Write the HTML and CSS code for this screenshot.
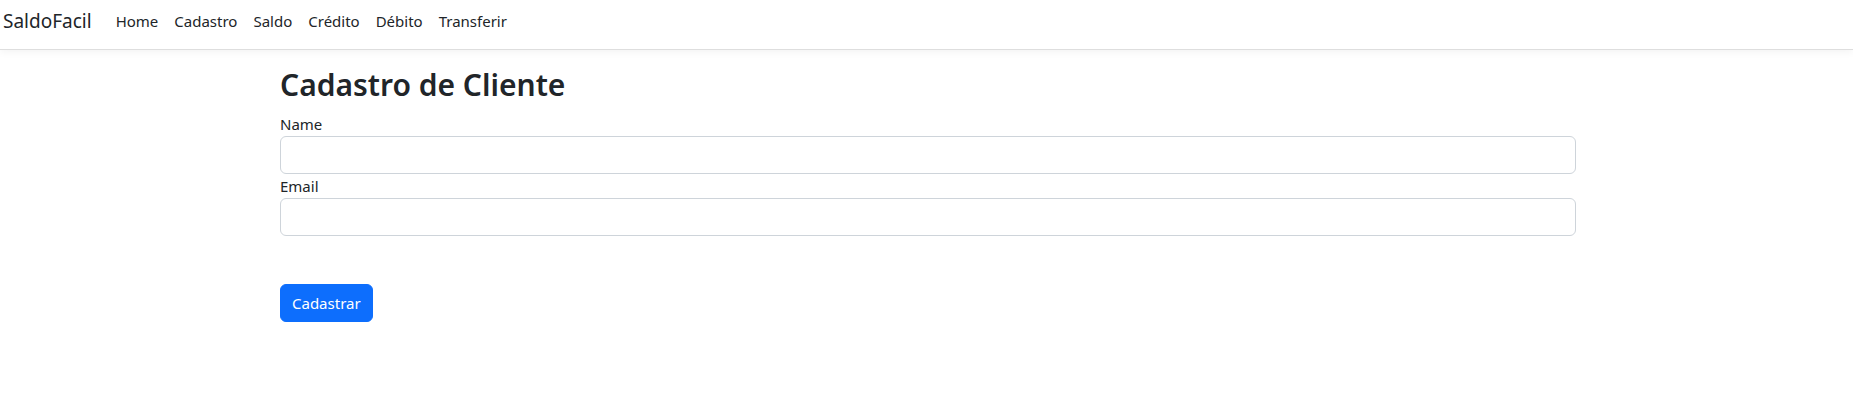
FILE: index.html
```html
<!DOCTYPE html>
<html lang="pt-BR">
<head>
<meta charset="utf-8">
<title>SaldoFacil</title>
<link rel="stylesheet" href="styles.css">
</head>
<body>
<header class="navbar">
  <a class="brand" href="#">SaldoFacil</a>
  <nav class="nav">
    <a class="nav-link" href="#">Home</a>
    <a class="nav-link" href="#">Cadastro</a>
    <a class="nav-link" href="#">Saldo</a>
    <a class="nav-link" href="#">Crédito</a>
    <a class="nav-link" href="#">Débito</a>
    <a class="nav-link" href="#">Transferir</a>
  </nav>
</header>
<div class="page">
  <main class="container">
    <h2 class="title">Cadastro de Cliente</h2>
    <form class="form">
      <label class="label" for="name">Name</label>
      <input class="control" id="name" type="text">
      <label class="label" for="email">Email</label>
      <input class="control" id="email" type="email">
      <div class="actions">
        <button class="btn" type="button">Cadastrar</button>
      </div>
    </form>
  </main>
</div>
</body>
</html>
```

FILE: styles.css
```css
* { box-sizing: border-box; }

html, body {
  margin: 0;
  padding: 0;
  background: #fff;
  color: #212529;
  font-family: "Noto Sans", "Open Sans", sans-serif;
  font-size: 15px;
  line-height: 24px;
}

.navbar {
  height: 50px;
  display: flex;
  align-items: flex-start;
  padding-left: 3px;
  border-bottom: 1px solid #dedede;
  box-shadow: 0 2px 8px rgba(0, 0, 0, 0.05);
  background: #fff;
}

.brand {
  font-size: 19px;
  line-height: 30px;
  margin-top: 6px;
  margin-right: 16px;
  color: #212529;
  text-decoration: none;
}

.nav {
  display: flex;
  margin-top: 9px;
}

.nav-link {
  padding: 0 8px;
  color: #212529;
  text-decoration: none;
  font-size: 15px;
  line-height: 24px;
}

.page {
  padding-left: 3px;
}

.container {
  width: 1296px;
  margin: 0 auto;
  padding-top: 16px;
}

.title {
  margin: 0 0 8px;
  font-size: 30px;
  line-height: 38.4px;
  font-weight: 600;
  color: #212529;
}

.form {
  display: flex;
  flex-direction: column;
  align-items: stretch;
}

.label {
  display: block;
  font-size: 15px;
  line-height: 24px;
}

.control {
  display: block;
  width: 100%;
  height: 38px;
  margin: 0;
  padding: 6px 12px;
  border: 1px solid #ced4da;
  border-radius: 6px;
  font: inherit;
  background: #fff;
}

.actions {
  margin-top: 48px;
}

.btn {
  height: 38px;
  padding: 0 11px;
  border: 1px solid #0d6efd;
  border-radius: 6px;
  background: #0d6efd;
  color: #fff;
  font-family: inherit;
  font-size: 15px;
  line-height: 24px;
}
```
